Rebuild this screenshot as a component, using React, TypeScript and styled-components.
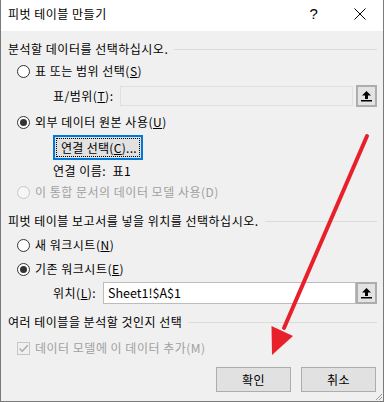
import React from "react";
import styled, { createGlobalStyle } from "styled-components";

const GlobalStyle = createGlobalStyle`
  html, body {
    margin: 0;
    padding: 0;
    background: #ffffff;
  }
  body {
    font-family: "Noto Sans CJK KR", "Noto Sans", sans-serif;
    font-size: 12px;
    letter-spacing: 0.5px;
    color: #000000;
  }
`;

const Window = styled.div`
  position: relative;
  width: 384px;
  height: 402px;
  box-sizing: border-box;
  border: 1px solid #7a7a7a;
  border-top: none;
  background: #f0f0f0;
  display: flex;
  flex-direction: column;
  overflow: hidden;
`;

const TitleBar = styled.div`
  height: 31px;
  background: #ffffff;
  display: flex;
  align-items: center;
  padding-left: 7px;
`;

const Title = styled.div`
  flex: 1;
  font-size: 12px;
  line-height: 16px;
  margin-top: -4px;
`;

const TitleButton = styled.div<{ $w: number }>`
  width: ${(p) => p.$w}px;
  height: 31px;
  display: flex;
  align-items: center;
  justify-content: center;
  font-family: "Liberation Sans", sans-serif;
  font-size: 15px;
  margin-top: -4px;
`;

const Body = styled.div`
  flex: 1;
  display: flex;
  flex-direction: column;
  padding: 0 6px 0 7px;
`;

const SectionHeader = styled.div<{ $mt: number }>`
  margin-top: ${(p) => p.$mt}px;
  height: 24px;
  display: flex;
  align-items: center;
  line-height: 16px;
  white-space: nowrap;

  &::after {
    content: "";
    flex: 1;
    height: 1px;
    background: #dcdcdc;
    margin-left: 6px;
  }
`;

const OptionRow = styled.div<{ $h: number; $disabled?: boolean }>`
  height: ${(p) => p.$h}px;
  display: flex;
  align-items: center;
  gap: 5px;
  padding-left: 9px;
  line-height: 16px;
  color: ${(p) => (p.$disabled ? "#a0a0a0" : "#000000")};
`;

const Radio = styled.span<{ $checked?: boolean; $disabled?: boolean }>`
  width: 11px;
  height: 11px;
  border-radius: 50%;
  border: 1px solid ${(p) => (p.$disabled ? "#c6c6c6" : "#333333")};
  background: ${(p) => (p.$disabled ? "#f6f6f6" : "#ffffff")};
  display: flex;
  align-items: center;
  justify-content: center;
  flex-shrink: 0;

  &::after {
    content: "";
    display: ${(p) => (p.$checked ? "block" : "none")};
    width: 7px;
    height: 7px;
    border-radius: 50%;
    background: #333333;
  }
`;

const CheckBox = styled.span`
  width: 11px;
  height: 11px;
  border: 1px solid #c6c6c6;
  background: #f0f0f0;
  display: flex;
  align-items: center;
  justify-content: center;
  flex-shrink: 0;
`;

const FieldRow = styled.div<{ $h: number }>`
  height: ${(p) => p.$h}px;
  display: flex;
  align-items: center;
  padding-left: 45px;
  line-height: 16px;
`;

const FieldLabel = styled.span<{ $w: number }>`
  width: ${(p) => p.$w}px;
  flex-shrink: 0;
  white-space: nowrap;
`;

const TextBox = styled.div<{ $disabled?: boolean; $h: number }>`
  flex: 1;
  height: ${(p) => p.$h}px;
  box-sizing: border-box;
  border: 1px solid ${(p) => (p.$disabled ? "#e0e0e0" : "#bcbcbc")};
  background: ${(p) => (p.$disabled ? "#efefef" : "#ffffff")};
  display: flex;
  align-items: center;
  padding-left: 4px;
  font-size: 12.5px;
  letter-spacing: 0;
`;

const RefButton = styled.div<{ $gap: number }>`
  width: 21px;
  height: 22px;
  box-sizing: border-box;
  margin-left: ${(p) => p.$gap}px;
  border: 2px solid #adadad;
  background: #e3e3e3;
  display: flex;
  align-items: center;
  justify-content: center;
`;

const ButtonRow = styled.div`
  height: 25px;
  margin-top: 2px;
  display: flex;
  padding-left: 45px;
`;

const ConnectButton = styled.div`
  width: 90px;
  height: 25px;
  box-sizing: border-box;
  border: 2px solid #0078d7;
  background: #e1e1e1;
  padding: 1px;
  display: flex;

  span {
    flex: 1;
    border: 1px dotted #000000;
    display: flex;
    align-items: center;
    padding-left: 4px;
    line-height: 16px;
    white-space: nowrap;
    letter-spacing: 0.3px;
  }
`;

const Footer = styled.div`
  margin-top: 5px;
  display: flex;
  justify-content: flex-end;
  gap: 10px;
  padding-right: 1px;
`;

const DialogButton = styled.div`
  width: 75px;
  height: 25px;
  box-sizing: border-box;
  border: 1px solid #adadad;
  background: #e1e1e1;
  display: flex;
  align-items: center;
  justify-content: center;
  line-height: 16px;
`;

const Grip = styled.svg`
  position: absolute;
  right: 0;
  bottom: 0;
`;

const Overlay = styled.svg`
  position: absolute;
  left: 0;
  top: 0;
  pointer-events: none;
`;

const UploadIcon = () => (
  <svg width="11" height="12" viewBox="0 0 11 12">
    <path d="M5.5 1 L10 5.5 L7 5.5 L7 9 L4 9 L4 5.5 L1 5.5 Z" fill="#000" />
    <rect x="0" y="10" width="11" height="1.5" fill="#000" />
  </svg>
);

const App = () => {
  return (
    <>
      <GlobalStyle />
      <Window>
        <TitleBar>
          <Title>피벗 테이블 만들기</Title>
          <TitleButton $w={46}>?</TitleButton>
          <TitleButton $w={46}>
            <svg width="12" height="12" viewBox="0 0 12 12">
              <path d="M0.5 0.5 L11.5 11.5 M11.5 0.5 L0.5 11.5" stroke="#000" strokeWidth="1" />
            </svg>
          </TitleButton>
        </TitleBar>
        <Body>
          <SectionHeader $mt={6}>분석할 데이터를 선택하십시오.</SectionHeader>
          <OptionRow $h={20}>
            <Radio />
            <span>
              표 또는 범위 선택(<u>S</u>)
            </span>
          </OptionRow>
          <FieldRow $h={30}>
            <FieldLabel $w={67}>
              표/범위(<u>T</u>):
            </FieldLabel>
            <TextBox $disabled $h={20} />
            <RefButton $gap={3}>
              <UploadIcon />
            </RefButton>
          </FieldRow>
          <OptionRow $h={22}>
            <Radio $checked />
            <span>
              외부 데이터 원본 사용(<u>U</u>)
            </span>
          </OptionRow>
          <ButtonRow>
            <ConnectButton>
              <span>
                연결 선택(<u>C</u>)...
              </span>
            </ConnectButton>
          </ButtonRow>
          <FieldRow $h={22}>연결 이름:&nbsp;&nbsp;표1</FieldRow>
          <OptionRow $h={20} $disabled>
            <Radio $disabled />
            <span>이 통합 문서의 데이터 모델 사용(D)</span>
          </OptionRow>
          <SectionHeader $mt={7}>피벗 테이블 보고서를 넣을 위치를 선택하십시오.</SectionHeader>
          <OptionRow $h={24}>
            <Radio />
            <span>
              새 워크시트(<u>N</u>)
            </span>
          </OptionRow>
          <OptionRow $h={24}>
            <Radio $checked />
            <span>
              기존 워크시트(<u>E</u>)
            </span>
          </OptionRow>
          <FieldRow $h={24}>
            <FieldLabel $w={50}>
              위치(<u>L</u>):
            </FieldLabel>
            <TextBox $h={22}>Sheet1!$A$1</TextBox>
            <RefButton $gap={0}>
              <UploadIcon />
            </RefButton>
          </FieldRow>
          <SectionHeader $mt={5}>여러 테이블을 분석할 것인지 선택</SectionHeader>
          <OptionRow $h={28} $disabled>
            <CheckBox>
              <svg width="11" height="11" viewBox="0 0 11 11">
                <path d="M1.5 5.5 L4.2 8.3 L9.8 2.2" stroke="#a8a8a8" strokeWidth="1.3" fill="none" />
              </svg>
            </CheckBox>
            <span>데이터 모델에 이 데이터 추가(M)</span>
          </OptionRow>
          <Footer>
            <DialogButton>확인</DialogButton>
            <DialogButton>취소</DialogButton>
          </Footer>
        </Body>
        <Grip width="10" height="10" viewBox="0 0 10 10">
          <path d="M9 3 L3 9 M9 6 L6 9" stroke="#9a9a9a" strokeWidth="1" />
        </Grip>
        <Overlay width="384" height="402" viewBox="0 0 384 402">
          <line x1="366" y1="136" x2="283" y2="328" stroke="#e8202a" strokeWidth="4" strokeLinecap="round" />
          <polygon points="271,355 270.5,326 292,336" fill="#e8202a" />
        </Overlay>
      </Window>
    </>
  );
};

export default App;
